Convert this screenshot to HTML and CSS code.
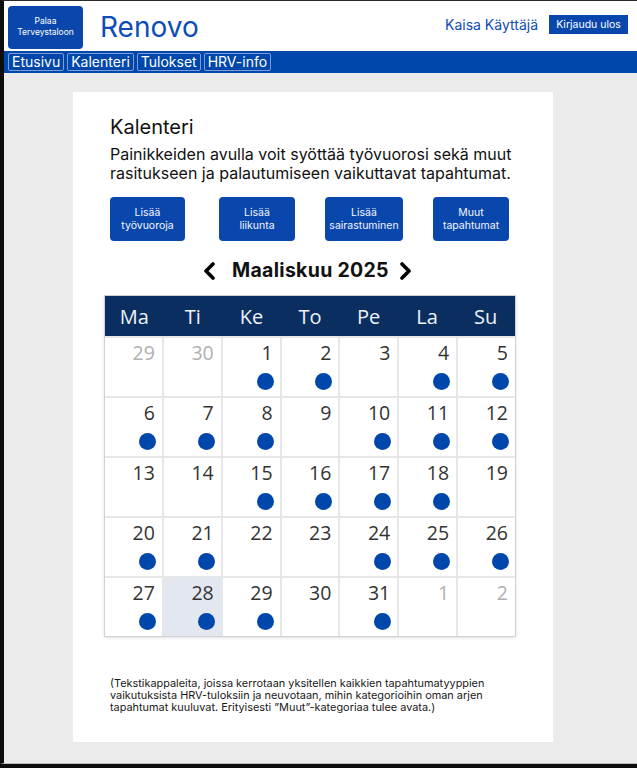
FILE: index.html
```html
<!DOCTYPE html>
<html lang="fi">
<head>
<meta charset="utf-8">
<title>Renovo – Kalenteri</title>
<link rel="stylesheet" href="styles.css">
</head>
<body>
<div class="frame">
  <header class="topbar">
    <a class="logo-btn" href="#">Palaa<br>Terveystaloon</a>
    <div class="brand">Renovo</div>
    <div class="user">
      <span class="user-name">Kaisa Käyttäjä</span>
      <button class="logout">Kirjaudu ulos</button>
    </div>
  </header>
  <nav class="navbar">
    <a class="nav-item" href="#">Etusivu</a>
    <a class="nav-item" href="#">Kalenteri</a>
    <a class="nav-item" href="#">Tulokset</a>
    <a class="nav-item" href="#">HRV-info</a>
  </nav>
  <main class="main">
    <section class="card">
      <h1 class="title">Kalenteri</h1>
      <p class="desc">Painikkeiden avulla voit syöttää työvuorosi sekä muut rasitukseen ja palautumiseen vaikuttavat tapahtumat.</p>
      <div class="actions">
        <button class="act act-1">Lisää<br>työvuoroja</button>
        <button class="act act-2">Lisää<br>liikunta</button>
        <button class="act act-3">Lisää<br>sairastuminen</button>
        <button class="act act-4">Muut<br>tapahtumat</button>
      </div>
      <div class="month-nav">
        <svg class="chev chev-left" width="14" height="18" viewBox="0 0 14 18"><polyline points="11,2 4,9 11,16" fill="none" stroke="#000" stroke-width="3.6" stroke-linecap="round" stroke-linejoin="round"/></svg>
        <span class="month">Maaliskuu 2025</span>
        <svg class="chev chev-right" width="14" height="18" viewBox="0 0 14 18"><polyline points="3,2 10,9 3,16" fill="none" stroke="#000" stroke-width="3.6" stroke-linecap="round" stroke-linejoin="round"/></svg>
      </div>
      <div class="calendar">
        <div class="cal-head">
          <span>Ma</span><span>Ti</span><span>Ke</span><span>To</span><span>Pe</span><span>La</span><span>Su</span>
        </div>
        <div class="cal-grid">
          <div class="day other"><span class="num">29</span></div>
          <div class="day other"><span class="num">30</span></div>
          <div class="day"><span class="num">1</span><i class="dot"></i></div>
          <div class="day"><span class="num">2</span><i class="dot"></i></div>
          <div class="day"><span class="num">3</span></div>
          <div class="day"><span class="num">4</span><i class="dot"></i></div>
          <div class="day"><span class="num">5</span><i class="dot"></i></div>

          <div class="day"><span class="num">6</span><i class="dot"></i></div>
          <div class="day"><span class="num">7</span><i class="dot"></i></div>
          <div class="day"><span class="num">8</span><i class="dot"></i></div>
          <div class="day"><span class="num">9</span></div>
          <div class="day"><span class="num">10</span><i class="dot"></i></div>
          <div class="day"><span class="num">11</span><i class="dot"></i></div>
          <div class="day"><span class="num">12</span><i class="dot"></i></div>

          <div class="day"><span class="num">13</span></div>
          <div class="day"><span class="num">14</span></div>
          <div class="day"><span class="num">15</span><i class="dot"></i></div>
          <div class="day"><span class="num">16</span><i class="dot"></i></div>
          <div class="day"><span class="num">17</span><i class="dot"></i></div>
          <div class="day"><span class="num">18</span><i class="dot"></i></div>
          <div class="day"><span class="num">19</span></div>

          <div class="day"><span class="num">20</span><i class="dot"></i></div>
          <div class="day"><span class="num">21</span><i class="dot"></i></div>
          <div class="day"><span class="num">22</span></div>
          <div class="day"><span class="num">23</span></div>
          <div class="day"><span class="num">24</span><i class="dot"></i></div>
          <div class="day"><span class="num">25</span><i class="dot"></i></div>
          <div class="day"><span class="num">26</span><i class="dot"></i></div>

          <div class="day"><span class="num">27</span><i class="dot"></i></div>
          <div class="day today"><span class="num">28</span><i class="dot"></i></div>
          <div class="day"><span class="num">29</span><i class="dot"></i></div>
          <div class="day"><span class="num">30</span></div>
          <div class="day"><span class="num">31</span><i class="dot"></i></div>
          <div class="day other"><span class="num">1</span></div>
          <div class="day other"><span class="num">2</span></div>
        </div>
      </div>
      <p class="note">(Tekstikappaleita, joissa kerrotaan yksitellen kaikkien tapahtumatyyppien vaikutuksista HRV-tuloksiin ja neuvotaan, mihin kategorioihin oman arjen tapahtumat kuuluvat. Erityisesti ”Muut”-kategoriaa tulee avata.)</p>
    </section>
  </main>
</div>
</body>
</html>
```

FILE: styles.css
```css
html, body {
  margin: 0;
  padding: 0;
  background: #0d0d0d;
}

body {
  font-family: Inter, "Liberation Sans", sans-serif;
  width: 637px;
  height: 768px;
  overflow: hidden;
}

.frame {
  box-sizing: border-box;
  height: 764px;
  border-left: 4px solid #0d0d0d;
  border-top: 1px solid #2a2a2a;
  border-bottom: 1px solid #b9b9b9;
  background: #ebebeb;
  display: flex;
  flex-direction: column;
}

/* Header */
.topbar {
  height: 50px;
  background: #fff;
  display: flex;
  align-items: center;
  flex-shrink: 0;
}

.logo-btn {
  box-sizing: border-box;
  width: 75px;
  height: 43px;
  margin-left: 4px;
  margin-top: 2px;
  background: #0a47ad;
  border-radius: 4px;
  color: #fff;
  text-decoration: none;
  font-size: 8.5px;
  line-height: 11px;
  display: flex;
  align-items: center;
  justify-content: center;
  text-align: center;
}

.brand {
  margin-left: 17px;
  font-size: 28px;
  color: #0d4db5;
  line-height: 34px;
  margin-top: 1px;
}

.user {
  margin-left: auto;
  margin-right: 9px;
  display: flex;
  align-items: center;
  gap: 11px;
  margin-bottom: 4px;
}

.user-name {
  font-size: 14px;
  color: #0d4db5;
}

.logout {
  box-sizing: border-box;
  height: 19px;
  width: 79px;
  padding: 0;
  border: none;
  background: #0a47ad;
  color: #fff;
  font-family: Inter, "Liberation Sans", sans-serif;
  font-size: 10.5px;
}

/* Nav */
.navbar {
  height: 22px;
  background: #0047ab;
  display: flex;
  align-items: center;
  padding-left: 4px;
  gap: 3px;
  flex-shrink: 0;
}

.nav-item {
  box-sizing: border-box;
  height: 18px;
  padding: 0 3px;
  border: 1px solid #7e9cd6;
  border-radius: 2px;
  color: #fff;
  text-decoration: none;
  font-size: 14px;
  line-height: 16px;
}

/* Main */
.main {
  flex: 1;
  padding-top: 19px;
  padding-left: 69px;
}

.card {
  box-sizing: border-box;
  width: 480px;
  height: 650px;
  background: #fff;
  padding: 23px 0 0 37px;
}

.title {
  margin: 0;
  font-weight: 400;
  font-size: 20px;
  line-height: 24px;
  color: #111;
}

.desc {
  margin: 6px 0 0;
  width: 410px;
  font-size: 16px;
  line-height: 19px;
  color: #111;
}

.actions {
  margin-top: 14px;
  display: flex;
}

.act {
  box-sizing: border-box;
  height: 44px;
  padding: 2px 0 0;
  border: none;
  border-radius: 4px;
  background: #0a47ad;
  color: #f2f5fb;
  font-family: Inter, "Liberation Sans", sans-serif;
  font-size: 10.5px;
  line-height: 12.7px;
}

.act-1 { width: 75px; }
.act-2 { width: 76px; margin-left: 34px; }
.act-3 { width: 78px; margin-left: 30px; }
.act-4 { width: 76px; margin-left: 30px; }

.month-nav {
  margin-top: 17px;
  margin-left: 92px;
  height: 24px;
  display: flex;
  align-items: center;
}

.chev { display: block; }
.chev-left { margin-right: 16px; margin-top: 1px; }
.chev-right { margin-left: 10px; margin-top: 1px; }

.month {
  font-weight: 700;
  font-size: 19.5px;
  line-height: 24px;
  color: #111;
  letter-spacing: 0.3px;
}

/* Calendar */
.calendar {
  box-sizing: border-box;
  width: 412px;
  margin-top: 13px;
  margin-left: -6px;
  border: 1px solid #cfd2d6;
  box-shadow: 0 1px 3px rgba(0, 0, 0, 0.12);
  font-family: "Open Sans", "DejaVu Sans", sans-serif;
}

.cal-head {
  height: 40px;
  background: #0a2e60;
  display: grid;
  grid-template-columns: repeat(7, 1fr);
  align-items: center;
  color: #eef2f7;
  font-size: 20px;
  text-align: center;
}

.cal-grid {
  display: grid;
  grid-template-columns: repeat(7, 1fr);
  grid-auto-rows: 58px;
  gap: 2px;
  padding-top: 2px;
  background: #e6e7e9;
}

.day {
  position: relative;
  background: #fff;
}

.day.today {
  background: #e3e7ef;
}

.num {
  position: absolute;
  top: 2px;
  right: 7px;
  font-size: 19.5px;
  line-height: 26px;
  color: #333;
}

.day.other .num {
  color: #b0b0b0;
}

.dot {
  position: absolute;
  right: 6px;
  bottom: 6px;
  width: 17px;
  height: 17px;
  border-radius: 50%;
  background: #0047ab;
}

.note {
  margin: 40px 0 0;
  width: 380px;
  font-size: 10.9px;
  line-height: 12px;
  color: #1a1a1a;
}
```
